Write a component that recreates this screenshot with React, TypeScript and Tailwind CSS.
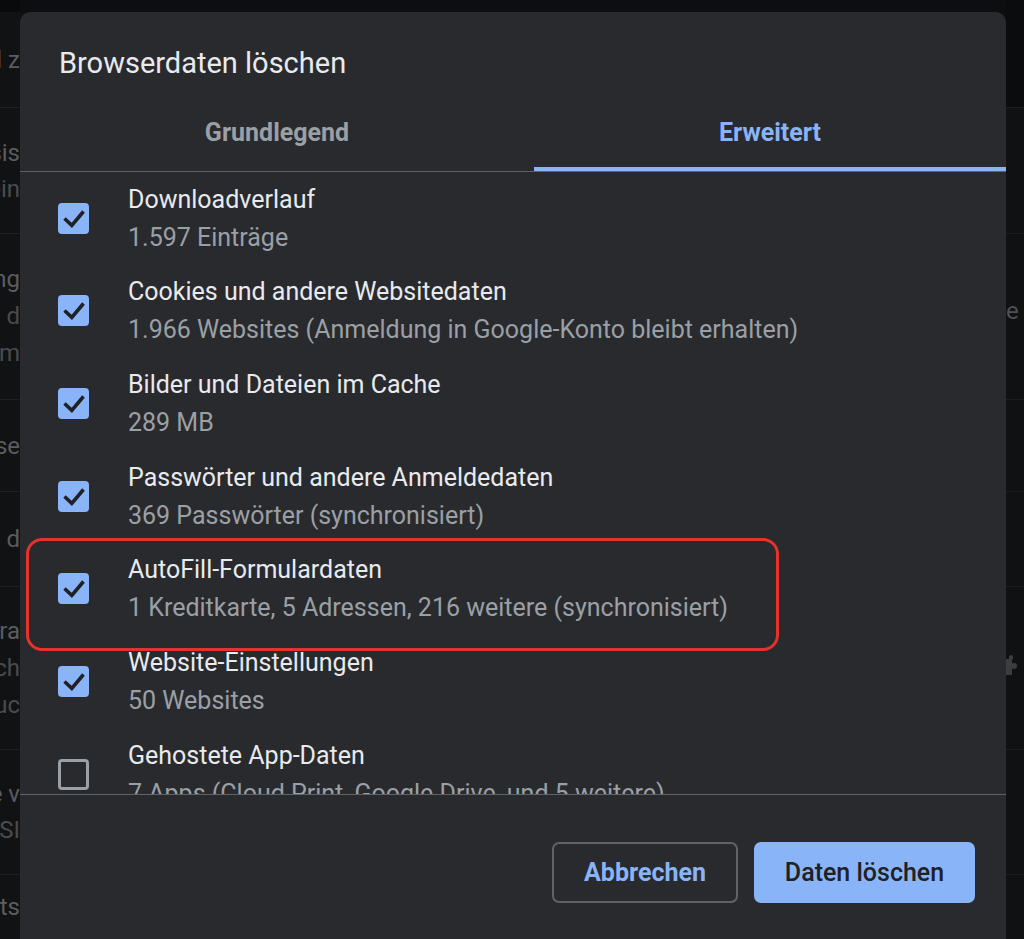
import React from "react";

const rows = [
  { title: "Downloadverlauf", sub: "1.597 Einträge", checked: true },
  { title: "Cookies und andere Websitedaten", sub: "1.966 Websites (Anmeldung in Google-Konto bleibt erhalten)", checked: true },
  { title: "Bilder und Dateien im Cache", sub: "289 MB", checked: true },
  { title: "Passwörter und andere Anmeldedaten", sub: "369 Passwörter (synchronisiert)", checked: true },
  { title: "AutoFill-Formulardaten", sub: "1 Kreditkarte, 5 Adressen, 216 weitere (synchronisiert)", checked: true },
  { title: "Website-Einstellungen", sub: "50 Websites", checked: true },
  { title: "Gehostete App-Daten", sub: "7 Apps (Cloud Print, Google Drive, und 5 weitere)", checked: false },
];

function Checkbox({ checked }: { checked: boolean }) {
  if (checked) {
    return (
      <div className="w-[31px] h-[31px] rounded-[4px] bg-[#8ab4f8] shrink-0">
        <svg width="31" height="31" viewBox="0 0 31 31" fill="none">
          <path d="M6.5 15.5 L13.8 22.3 L25.5 8.5" stroke="#202124" strokeWidth="3.6" strokeLinecap="butt" strokeLinejoin="miter" />
        </svg>
      </div>
    );
  }
  return <div className="w-[31px] h-[31px] rounded-[4px] border-[3px] border-[#9aa0a6] shrink-0" />;
}

export default function App() {
  return (
    <div
      className="relative w-full h-[939px] overflow-hidden bg-[#0d0e10]"
      style={{ fontFamily: "Roboto, 'Liberation Sans', sans-serif" }}
    >
      {/* background settings page (dimmed) */}
      <div className="flex h-full">
        <div className="w-[20px] flex flex-col text-[24px] text-[#5b5c5f] bg-[#111214]">
          <div className="h-[12px] bg-[#0a0a0b]" />
          <div className="h-[96px] flex items-center justify-end overflow-hidden whitespace-nowrap border-b border-[#1f2022]">
            <span>und z</span>
          </div>
          <div className="h-[126px] flex flex-col justify-center items-end overflow-hidden whitespace-nowrap border-b border-[#1f2022] leading-[36px]">
            <span>Basis</span>
            <span className="text-[#4a4b4e]">Verein</span>
          </div>
          <div className="h-[166px] flex flex-col justify-center items-end overflow-hidden whitespace-nowrap border-b border-[#1f2022] leading-[37px]">
            <span>Einstellung</span>
            <span className="text-[#4a4b4e]">und d</span>
            <span className="text-[#4a4b4e]">Formm</span>
          </div>
          <div className="h-[92px] flex items-center justify-end overflow-hidden whitespace-nowrap border-b border-[#1f2022]">
            <span>Sicherheit se</span>
          </div>
          <div className="h-[95px] flex items-center justify-end overflow-hidden whitespace-nowrap border-b border-[#1f2022]">
            <span>Website d</span>
          </div>
          <div className="h-[163px] flex flex-col justify-center items-end overflow-hidden whitespace-nowrap border-b border-[#1f2022] leading-[37px]">
            <span>Datentra</span>
            <span className="text-[#4a4b4e]">Datenach</span>
            <span className="text-[#4a4b4e]">Suche Suc</span>
          </div>
          <div className="h-[125px] flex flex-col justify-center items-end overflow-hidden whitespace-nowrap border-b border-[#1f2022] leading-[36px]">
            <span>Sitze v</span>
            <span className="text-[#4a4b4e]">SSI</span>
          </div>
          <div className="flex-1 flex items-center justify-end overflow-hidden whitespace-nowrap">
            <span>Extensions ts</span>
          </div>
        </div>
        <div className="flex-1" />
        <div className="w-[18px] flex flex-col text-[24px] text-[#4f5053] bg-[#101113]">
          <div className="h-[108px] bg-[#0b0c0d] border-b border-[#1c1d1f]" />
          <div className="h-[126px] border-b border-[#1c1d1f]" />
          <div className="h-[166px] flex items-center justify-start overflow-hidden border-b border-[#1c1d1f] pb-[12px]">
            <span>e</span>
          </div>
          <div className="h-[92px] border-b border-[#1c1d1f]" />
          <div className="h-[95px] border-b border-[#1c1d1f]" />
          <div className="h-[163px] flex items-center overflow-hidden border-b border-[#1c1d1f] pb-[4px]">
            <svg width="14" height="22" viewBox="0 0 14 22" fill="#3c3d40">
              <rect x="0" y="4" width="6" height="16" />
              <rect x="3" y="0" width="4" height="5" rx="2" />
              <rect x="5" y="8" width="6" height="6" rx="3" />
            </svg>
          </div>
          <div className="h-[125px] border-b border-[#1c1d1f]" />
          <div className="flex-1" />
        </div>
      </div>

      {/* dialog overlay */}
      <div className="absolute left-[20px] top-[12px] w-[986px] h-[940px] bg-[#292a2d] rounded-[10px] flex flex-col text-[#e8eaed]">
        <div className="pt-[33px] pl-[39px] text-[29px] leading-[36px]">Browserdaten löschen</div>

        <div className="mt-[18px] flex border-b border-[#5f6368]">
          <div className="w-[514px] h-[72px] flex items-center justify-center text-[25px] font-bold text-[#9aa0a6] border-b-[4px] border-transparent">
            Grundlegend
          </div>
          <div className="flex-1 h-[72px] flex items-center justify-center text-[25px] font-bold text-[#8ab4f8] border-b-[4px] border-[#8ab4f8] -mb-px">
            Erweitert
          </div>
        </div>

        <div className="h-[623px] overflow-hidden border-b border-[#5f6368]">
          {rows.map((r) => (
            <div key={r.title} className="h-[92.67px] flex items-center pl-[38px]">
              <Checkbox checked={r.checked} />
              <div className="ml-[39px] flex flex-col pt-[1px]">
                <div className="text-[25px] leading-[38px] text-[#e8eaed] whitespace-nowrap">{r.title}</div>
                <div className="text-[25px] leading-[38px] text-[#9aa0a6] whitespace-nowrap">{r.sub}</div>
              </div>
            </div>
          ))}
        </div>

        <div className="flex justify-end gap-[16px] pt-[47px] pr-[31px]">
          <button className="w-[186px] h-[61px] rounded-[7px] border-[2px] border-[#5f6368] text-[#8ab4f8] text-[25px] font-bold bg-transparent">
            Abbrechen
          </button>
          <button className="w-[221px] h-[61px] rounded-[7px] bg-[#8ab4f8] text-[#202124] text-[25px] font-medium">
            Daten löschen
          </button>
        </div>

        {/* red highlight */}
        <div className="absolute left-[6px] top-[526px] w-[753px] h-[113px] rounded-[16px] border-[3.5px] border-[#e5322b] pointer-events-none" />
      </div>
    </div>
  );
}
